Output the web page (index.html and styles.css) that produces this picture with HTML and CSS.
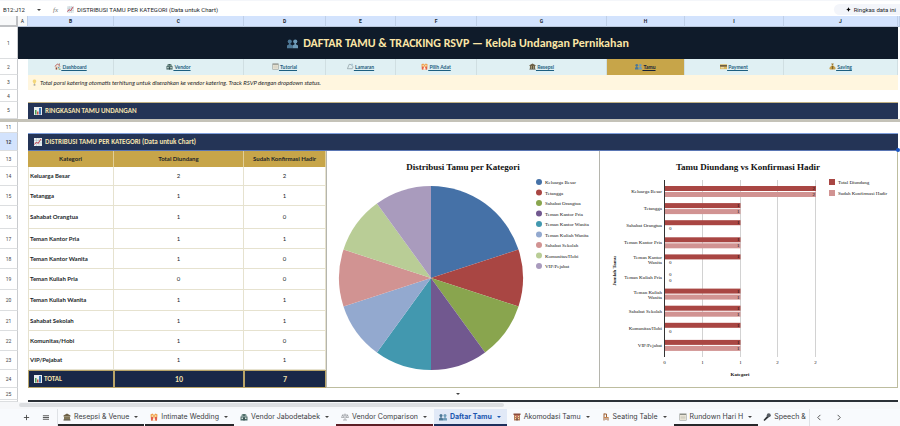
FILE: index.html
```html
<!DOCTYPE html>
<html lang="id">

<head>
    <meta charset="UTF-8">
    <meta name="viewport" content="width=device-width, initial-scale=1.0">
    <title>Daftar Tamu</title>
    <link rel="stylesheet" href="styles.css">
</head>

<body>
    <!-- icon set -->
    <svg class="sprite" aria-hidden="true">
        <symbol id="house" viewBox="0 0 16 16"><path fill="#e9d8c4" d="M3 7h10v8H3z"/><path fill="#b5453c" d="M8 1 1 8h2l5-5 5 5h2z"/><path fill="#8a4b3a" d="M11 1h2v4l-2-2zM4 10h3v5H4z"/><path fill="#5aa0c8" d="M9 9h3v3H9z"/><path fill="#5d9a4b" d="M11 13h4v2h-4z"/></symbol>
        <symbol id="shop" viewBox="0 0 16 16"><path fill="#7c9a94" d="M4 2h8l2 5H2z"/><path fill="#4c6b69" d="M1 7h14v8H1z"/><path fill="#d7e3dc" d="M3 9h3v3H3zM10 9h3v3h-3z"/><path fill="#2d4544" d="M7 10h2v5H7zM6 3h4v2H6z"/></symbol>
        <symbol id="note" viewBox="0 0 16 16"><path fill="#8b8e86" d="M1 1h14v14H1z"/><path fill="#eeeadc" d="M2 4h12v10H2z"/><path stroke="#b9b7aa" d="M3 6.500h10M3 9h10M3 11.500h10"/></symbol>
        <symbol id="ring" viewBox="0 0 16 16"><path fill="none" stroke="#85949a" stroke-width="1.500" d="M1 13 5 3l5 1 4 5-2 4z"/><path fill="#a9c9d8" d="m9 2 3-1 2 3-3 2z"/></symbol>
        <symbol id="couple" viewBox="0 0 16 16"><path fill="#f0a04b" d="M1 3 5 1l3 3 3-3 4 2-1 12H2z"/><path fill="#e25f4d" d="M2 8h4v7H2zM10 8h4v7h-4z"/><circle cx="5" cy="6" r="2" fill="#f8d7a5"/><circle cx="11" cy="6" r="2" fill="#f8d7a5"/><path fill="#fff0e6" d="m8 7 3 8H5z"/></symbol>
        <symbol id="bank" viewBox="0 0 16 16"><path fill="#6c6046" d="m8 1 7 4v2H1V5z"/><path fill="#b6a77d" d="M2 7h12v6H2z"/><path fill="#4d4635" d="M3 7h2v6H3zM7 7h2v6H7zM11 7h2v6h-2zM1 13h14v2H1z"/></symbol>
        <symbol id="people" viewBox="0 0 16 16"><circle cx="4" cy="5" r="3" fill="#4d7896"/><circle cx="12" cy="5" r="3" fill="#6e9bb8"/><path fill="#4d7896" d="M3 7h2v2l3 2v4H0v-4l3-2z"/><path fill="#6e9bb8" d="M11 7h2v2l3 2v4H8v-4l3-2z"/></symbol>
        <symbol id="card" viewBox="0 0 16 16"><path fill="#d9b65e" d="M0 3h16v11H0z"/><path fill="#554b3f" d="M0 5h16v3H0z"/><path fill="#f7ecd0" d="M2 10h7v2H2z"/></symbol>
        <symbol id="money" viewBox="0 0 16 16"><path fill="#9d7a30" d="M5 1h6L9 5H7z"/><path fill="#c9a24b" d="M7 5h2c8 5 7 10 3 10H4C0 15-1 10 7 5z"/><path fill="none" stroke="#5d471b" d="M10 8H7v2h2v3H6M8 7v7"/></symbol>
        <symbol id="bulb" viewBox="0 0 16 16"><path fill="#f3d77b" d="M8 1c5 0 5 6 2 8l-1 3H7L6 9C3 7 3 1 8 1z"/><path fill="#9a9a92" d="M6 12h4v3H6z"/></symbol>
        <symbol id="bars" viewBox="0 0 16 16"><path fill="#e8eef0" d="M0 0h16v16H0z"/><path fill="#4e9c55" d="M2 6h3v9H2z"/><path fill="#c9544a" d="M6 9h3v6H6z"/><path fill="#3a78b8" d="M10 2h4v13h-4z"/></symbol>
        <symbol id="trend" viewBox="0 0 16 16"><path fill="#e8eef0" d="M0 0h16v16H0z"/><path stroke="#a8bcc6" d="M0 5h16M0 10h16M5 0v16M10 0v16"/><path fill="none" stroke="#c63f4c" stroke-width="2" d="m1 13 4-5 3 3 6-9"/></symbol>
        <symbol id="scale" viewBox="0 0 16 16"><path fill="none" stroke="#8c9094" stroke-width="1.300" d="M8 1v13M2 4h12M4 14h8M1 9l2-5 3 5zM10 9l3-5 2 5z"/></symbol>
        <symbol id="hotel" viewBox="0 0 16 16"><path fill="#b67c5c" d="M2 3h12v12H2z"/><path fill="#8a4b3a" d="M1 1h14v3H1z"/><path fill="#f4dfa0" d="M4 6h2v2H4zM10 6h2v2h-2zM4 10h2v2H4zM10 10h2v2h-2z"/><path fill="#e25f6d" d="M7 5h2v3H7z"/><path fill="#4a3a34" d="M7 11h2v4H7z"/></symbol>
        <symbol id="chair" viewBox="0 0 16 16"><path fill="none" stroke="#9c5f33" stroke-width="2" d="M4 1v14M4 9h8v6M4 2h5v6M8 9v5"/><path fill="#c98750" d="M4 8h9v2H4z"/></symbol>
        <symbol id="mic" viewBox="0 0 16 16"><path fill="#2e3236" d="m9 5 3 3-9 8-2-2z"/><circle cx="11.500" cy="4.500" r="4" fill="#565c62"/></symbol>
        <symbol id="spark" viewBox="0 0 16 16"><path d="M8 0c1 5 3 7 8 8-5 1-7 3-8 8-1-5-3-7-8-8 5-1 7-3 8-8z"/></symbol>
    </svg>

    <header class="formula-bar">
        <input class="name-box" type="text" value="B12:J12" aria-label="Kotak nama">
        <button class="arrow" aria-label="Daftar rentang"></button>
        <span class="fx">fx</span>
        <svg class="icon"><use href="#trend"/></svg>
        <input class="formula" type="text" value="DISTRIBUSI TAMU PER KATEGORI (Data untuk Chart)" aria-label="Formula">
        <button class="summary"><svg class="icon"><use href="#spark"/></svg>Ringkas data ini</button>
    </header>

    <main>
        <table class="sheet">
            <colgroup>
                <col class="col-num"><col class="col-a"><col class="col-b"><col class="col-c"><col class="col-d"><col class="col-e"><col class="col-f"><col class="col-g"><col class="col-h"><col class="col-i"><col class="col-j"><col class="col-rest">
            </colgroup>
            <thead>
                <tr class="letters">
                    <th class="corner"></th><th class="plain">A</th><th>B</th><th>C</th><th>D</th><th>E</th><th>F</th><th>G</th><th>H</th><th>I</th><th>J</th><th></th>
                </tr>
            </thead>
            <tbody>
                <tr class="r-title">
                    <th>1</th>
                    <td colspan="10" class="title"><svg class="icon"><use href="#people"/></svg>DAFTAR TAMU &amp; TRACKING RSVP — Kelola Undangan Pernikahan</td>
                    <td></td>
                </tr>
                <tr class="r-nav">
                    <th>2</th><td></td>
                    <td><a href="#"><svg class="icon"><use href="#house"/></svg> Dashboard</a></td>
                    <td><a href="#"><svg class="icon"><use href="#shop"/></svg> Vendor</a></td>
                    <td><a href="#"><svg class="icon"><use href="#note"/></svg> Tutorial</a></td>
                    <td><a href="#"><svg class="icon"><use href="#ring"/></svg> Lamaran</a></td>
                    <td><a href="#"><svg class="icon"><use href="#couple"/></svg> Pilih Adat</a></td>
                    <td><a href="#"><svg class="icon"><use href="#bank"/></svg> Resepsi</a></td>
                    <td class="current"><a href="#"><svg class="icon"><use href="#people"/></svg> Tamu</a></td>
                    <td><a href="#"><svg class="icon"><use href="#card"/></svg> Payment</a></td>
                    <td><a href="#"><svg class="icon"><use href="#money"/></svg> Saving</a></td>
                    <td></td>
                </tr>
                <tr class="r-tip">
                    <th>3</th><td></td>
                    <td colspan="9" class="tip"><svg class="icon"><use href="#bulb"/></svg>Total porsi katering otomatis terhitung untuk diserahkan ke vendor katering. Track RSVP dengan dropdown status.</td>
                    <td></td>
                </tr>
                <tr class="r-gap"><th>4</th><td colspan="11"></td></tr>
                <tr class="r-section">
                    <th>5</th><td></td>
                    <td colspan="9" class="section"><svg class="icon"><use href="#bars"/></svg>RINGKASAN TAMU UNDANGAN</td>
                    <td></td>
                </tr>
                <tr class="freeze"><td colspan="12"></td></tr>
                <tr class="r-small"><th>11</th><td colspan="11"></td></tr>
                <tr class="r-selected">
                    <th>12</th><td></td>
                    <td colspan="9" class="section selected"><svg class="icon"><use href="#trend"/></svg>DISTRIBUSI TAMU PER KATEGORI (Data untuk Chart)<span class="handle"></span></td>
                    <td></td>
                </tr>
                <tr class="h16 heads">
                    <th>13</th><td></td>
                    <td>Kategori</td><td>Total Diundang</td><td>Sudah Konfirmasi Hadir</td>
                    <td colspan="6" rowspan="12" class="chart-cell">
                        <div class="charts">
                            <figure class="pie"><svg id="pieChart" viewBox="0 0 273 237" role="img" aria-label="Distribusi Tamu per Kategori"></svg></figure>
                            <figure class="bar"><svg id="barChart" viewBox="0 0 299 237" role="img" aria-label="Tamu Diundang vs Konfirmasi Hadir"></svg></figure>
                        </div>
                    </td>
                    <td></td>
                </tr>
                <tr class="h19 data"><th>14</th><td></td><td>Keluarga Besar</td><td>2</td><td>2</td><td></td></tr>
                <tr class="h20 data"><th>15</th><td></td><td>Tetangga</td><td>1</td><td>1</td><td></td></tr>
                <tr class="h23 data"><th>16</th><td></td><td>Sahabat Orangtua</td><td>1</td><td>0</td><td></td></tr>
                <tr class="h20 data"><th>17</th><td></td><td>Teman Kantor Pria</td><td>1</td><td>1</td><td></td></tr>
                <tr class="h20 data"><th>18</th><td></td><td>Teman Kantor Wanita</td><td>1</td><td>0</td><td></td></tr>
                <tr class="h21 data"><th>19</th><td></td><td>Teman Kuliah Pria</td><td>0</td><td>0</td><td></td></tr>
                <tr class="h21 data"><th>20</th><td></td><td>Teman Kuliah Wanita</td><td>1</td><td>1</td><td></td></tr>
                <tr class="h20 data"><th>21</th><td></td><td>Sahabat Sekolah</td><td>1</td><td>1</td><td></td></tr>
                <tr class="h20 data"><th>22</th><td></td><td>Komunitas/Hobi</td><td>1</td><td>0</td><td></td></tr>
                <tr class="h19 data"><th>23</th><td></td><td>VIP/Pejabat</td><td>1</td><td>1</td><td></td></tr>
                <tr class="h18 total"><th>24</th><td></td><td><svg class="icon"><use href="#bars"/></svg>TOTAL</td><td>10</td><td>7</td><td></td></tr>
                <tr class="r-gap"><th>25</th><td colspan="10" class="more"><button class="arrow" aria-label="Baris lainnya"></button></td><td></td></tr>
                <tr class="r-next"><th></th><td></td><td colspan="9" class="dark"></td><td></td></tr>
            </tbody>
        </table>
        <div class="scrollbar"><span></span></div>
    </main>

    <footer class="tabs">
        <button class="tool" aria-label="Tambah sheet"><svg viewBox="0 0 8 8"><path d="M4 1v6M1 4h6"/></svg></button>
        <button class="tool" aria-label="Semua sheet"><svg viewBox="0 0 8 8"><path d="M1 2h7M1 4h7M1 6h7"/></svg></button>
        <nav>
            <button class="tab black"><svg class="icon"><use href="#bank"/></svg>Resepsi &amp; Venue<i class="arrow"></i></button>
            <button class="tab black"><svg class="icon"><use href="#couple"/></svg>Intimate Wedding<i class="arrow"></i></button>
            <button class="tab"><svg class="icon"><use href="#shop"/></svg>Vendor Jabodetabek<i class="arrow"></i></button>
            <button class="tab maroon"><svg class="icon"><use href="#scale"/></svg>Vendor Comparison<i class="arrow"></i></button>
            <button class="tab active"><svg class="icon"><use href="#people"/></svg>Daftar Tamu<i class="arrow"></i></button>
            <button class="tab"><svg class="icon"><use href="#hotel"/></svg>Akomodasi Tamu<i class="arrow"></i></button>
            <button class="tab"><svg class="icon"><use href="#chair"/></svg>Seating Table<i class="arrow"></i></button>
            <button class="tab black"><svg class="icon"><use href="#note"/></svg>Rundown Hari H<i class="arrow"></i></button>
            <button class="tab last"><svg class="icon"><use href="#mic"/></svg>Speech &amp;</button>
        </nav>
        <button class="tool" aria-label="Sebelumnya"><svg viewBox="0 0 8 8"><path d="M5 1 2 4l3 3"/></svg></button>
        <button class="tool" aria-label="Berikutnya"><svg viewBox="0 0 8 8"><path d="m3 1 3 3-3 3"/></svg></button>
    </footer>

    <script src="charts.js"></script>
</body>

</html>
```
FILE: styles.css
```css
* {
    box-sizing: border-box;
}

body {
    display: flex;
    flex-direction: column;
    min-height: 100vh;
    margin: 0;
    overflow-x: hidden;
    font-family: Lato, "Open Sans", sans-serif;
    font-size: 6px;
    line-height: 8px;
    color: #1b1f2a;
    background-color: #fff;
}

button, input {
    font: inherit;
    color: inherit;
    border: none;
    padding: 0;
    margin: 0;
    background: none;
}

button {
    cursor: pointer;
}

.sprite {
    display: none;
}

.icon {
    width: 7px;
    height: 7px;
    flex: none;
    vertical-align: -1px;
}

.arrow {
    width: 0;
    height: 0;
    flex: none;
    border: 2px solid transparent;
    border-top-color: #444;
    border-bottom: none;
}

/* formula bar */
.formula-bar {
    display: flex;
    align-items: center;
    height: 16px;
    padding: 3px 0 1px 3px;
    border-top: 1px solid #f4f6fa;
    font-family: Roboto, sans-serif;
}

.name-box {
    width: 34px;
}

.fx {
    margin: 0 9px 0 12px;
    font: italic 7px "Liberation Serif", serif;
    color: #777;
}

.formula {
    flex: 1;
    margin-left: 3px;
}

.summary {
    display: flex;
    align-items: center;
    gap: 3px;
    height: 11px;
    padding: 0 4px 0 12px;
    border-radius: 6px 0 0 6px;
    background-color: #f3f5fa;
}

.summary .icon {
    width: 5px;
    height: 5px;
}

/* sheet */
main {
    flex: 1;
}

.sheet {
    width: 100%;
    table-layout: fixed;
    border-collapse: separate;
    border-spacing: 0;
}

.col-num { width: 18px; }
.col-a { width: 10px; }
.col-b { width: 86px; }
.col-c { width: 130px; }
.col-d { width: 82px; }
.col-e { width: 70px; }
.col-f { width: 81px; }
.col-g { width: 130px; }
.col-h { width: 78px; }
.col-i { width: 99px; }
.col-j { width: 114px; }
.col-rest { width: 2px; }

.sheet th, .sheet td {
    padding: 0;
    vertical-align: middle;
}

.sheet tbody th {
    font: 5px/6px Roboto, sans-serif;
    color: #444;
    text-align: center;
    border-right: 1px solid #c9cbce;
    border-bottom: 1px solid #dcdee0;
}

.letters { height: 11px; }
.r-title { height: 32px; }
.r-nav { height: 16px; }
.r-tip { height: 15px; }
.r-gap { height: 12px; }
.r-section { height: 17px; }
.freeze { height: 3px; }
.r-small { height: 11px; }
.r-selected { height: 18px; }
.r-next { height: 2px; }
.h16 { height: 16px; }
.h18 { height: 18px; }
.h19 { height: 19px; }
.h20 { height: 20px; }
.h21 { height: 21px; }
.h23 { height: 23px; }

.letters th {
    font: bold 5px/6px Roboto, sans-serif;
    background-color: #d3e3fd;
    border-right: 1px solid #bfcfe8;
    border-bottom: 1px solid #b9c6da;
}

.letters .corner, .letters .plain {
    background-color: #f8f9fa;
    font-weight: normal;
}

.letters .corner {
    border-right: 2px solid #bfc1c4;
    border-bottom: 2px solid #bfc1c4;
}

.sheet .title {
    background-color: #0f1b2a;
    color: #fbe6a6;
    font-family: Carlito, Lato, sans-serif;
    font-size: 12px;
    line-height: 14px;
    font-weight: bold;
    text-align: center;
}

.title .icon {
    width: 11px;
    height: 11px;
    margin-right: 5px;
    vertical-align: -2px;
}

.r-nav td:nth-child(n+3):nth-child(-n+11) {
    background-color: #e0f0f3;
    border-right: 1px solid #d0dfe2;
    font-size: 5px;
    font-weight: bold;
    text-align: center;
}

.r-nav a {
    color: #1d5f80;
}

.r-nav .current.current.current {
    background-color: #c7a549;
}

.r-nav .current a {
    color: #14213a;
}

.sheet .tip {
    background-color: #fff6df;
    padding-left: 3px;
    font-style: italic;
}

.tip .icon {
    margin-right: 2px;
}

.sheet .section {
    background-color: #243456;
    color: #f5e3ae;
    padding-left: 6px;
    font-family: Carlito, Lato, sans-serif;
    font-size: 7px;
    font-weight: bold;
    border-top: 1px solid #c0b083;
}

.section .icon, .total .icon {
    width: 8px;
    height: 8px;
    margin-right: 3px;
    vertical-align: -2px;
}

.freeze td {
    background-color: #c4c2b8;
}

.sheet .r-selected th {
    background-color: #d3e3fd;
    font-weight: bold;
}

.sheet .selected {
    position: relative;
    border-top: 1px solid #7f9fdc;
    border-bottom: 1px solid #5a76b4;
}

.handle {
    position: absolute;
    right: -2px;
    bottom: -2px;
    width: 4px;
    height: 4px;
    border-radius: 50%;
    background-color: #1a56c4;
}

.heads td:nth-child(n+3):nth-child(-n+5) {
    background-color: #c7a549;
    border-right: 1px solid #e2cf97;
    font-weight: bold;
    text-align: center;
}

.data td:nth-child(n+3):nth-child(-n+5) {
    border-right: 1px solid #e6e2cf;
    border-bottom: 1px solid #e6e2cf;
    text-align: center;
}

.sheet .data td:nth-child(3) {
    border-left: 1px solid #e6e2cf;
    padding-left: 1px;
    text-align: left;
    font-weight: bold;
}

.total td:nth-child(n+3):nth-child(-n+5) {
    background-color: #192848;
    border: 1px solid #b8a468;
    color: #f5e3ae;
    text-align: center;
    font-size: 7px;
    font-weight: bold;
}

.sheet .total td:nth-child(3) {
    padding-left: 5px;
    text-align: left;
    font-family: Carlito, Lato, sans-serif;
}

.total .icon {
    margin-right: 2px;
}

.more .arrow {
    display: block;
    margin: 0 auto;
}

.sheet .dark {
    background-color: #2b3036;
}

/* charts */
.charts {
    display: flex;
    background-color: #fff;
}

.charts figure {
    margin: 0;
    box-shadow: inset 1px 0 #b5b5ad, inset 0 -1px #bdbd9f;
}

.charts .pie { flex: 273; }
.charts .bar { flex: 299; box-shadow: inset 1px 0 #b5b5ad, inset 0 -1px #bdbd9f, inset -1px 0 #bdbd9f; }

.charts svg {
    display: block;
    width: 100%;
    font-family: "Liberation Serif", serif;
    font-size: 5px;
    fill: #111;
}

.chart-title {
    font-size: 9px;
    font-weight: bold;
    text-anchor: middle;
}

.axis-title {
    font-weight: bold;
    text-anchor: middle;
}

.end { text-anchor: end; }
.mid { text-anchor: middle; }

.scrollbar {
    height: 7px;
    padding: 1px 0 2px 19px;
    background-color: #f6f7f9;
}

.scrollbar span {
    display: block;
    width: 55%;
    height: 4px;
    background-color: #dcdee1;
    border-radius: 2px;
}

/* sheet tabs */
.tabs {
    display: flex;
    height: 17px;
    padding: 0 52px 0 17px;
    background-color: #f8fafd;
    font-family: Inter, Roboto, sans-serif;
    font-size: 7px;
    color: #3c4043;
}

.tool {
    width: 19px;
    flex: none;
    display: flex;
    align-items: center;
    justify-content: center;
}

.tool svg {
    width: 7px;
    height: 7px;
    fill: none;
    stroke: #444;
}

.tabs nav {
    display: flex;
    flex: 1;
    min-width: 0;
    margin-left: 2px;
    overflow: hidden;
    border-left: 1px solid #dfe2e6;
    border-right: 1px solid #dfe2e6;
}

.tab {
    display: flex;
    align-items: center;
    flex: none;
    gap: 3px;
    padding: 0 6px 0 5px;
    margin-right: 1px;
    border-bottom: 2px solid transparent;
    white-space: nowrap;
}

.tab .icon {
    width: 8px;
    height: 8px;
}

.tab .arrow {
    margin-left: 2px;
}

.tab.last {
    padding: 0 0 0 4px;
    margin-right: 0;
}

.tab.black { border-bottom-color: #26282b; }
.tab.maroon { border-bottom-color: #5c1f26; }

.tab.active {
    background-color: #e1e9f7;
    border-bottom-color: #1c2f5c;
    color: #1a56b0;
    font-weight: bold;
}

.tab.active .arrow {
    border-top-color: #1a56b0;
}
```
FILE: charts.js
```js
const guests = [
    { name: ["Keluarga Besar"], invited: 2, confirmed: 2, color: "#4571a7" },
    { name: ["Tetangga"], invited: 1, confirmed: 1, color: "#a94643" },
    { name: ["Sahabat Orangtua"], invited: 1, confirmed: 0, color: "#89a54e" },
    { name: ["Teman Kantor Pria"], invited: 1, confirmed: 1, color: "#71588f" },
    { name: ["Teman Kantor", "Wanita"], invited: 1, confirmed: 0, color: "#4298af" },
    { name: ["Teman Kuliah Pria"], invited: 0, confirmed: 0, color: "#db843d" },
    { name: ["Teman Kuliah", "Wanita"], invited: 1, confirmed: 1, color: "#93a9cf" },
    { name: ["Sahabat Sekolah"], invited: 1, confirmed: 1, color: "#d19392" },
    { name: ["Komunitas/Hobi"], invited: 1, confirmed: 0, color: "#b9cd96" },
    { name: ["VIP/Pejabat"], invited: 1, confirmed: 1, color: "#a99bbd" }
];

function drawPie() {
    const cx = 105, cy = 127, r = 92;
    const shown = guests.filter(g => g.invited > 0);
    const total = shown.reduce((sum, g) => sum + g.invited, 0);
    let out = `<text class="chart-title" x="137" y="19">Distribusi Tamu per Kategori</text>`;
    let angle = 0;

    shown.forEach((g, i) => {
        const next = angle + g.invited / total * Math.PI * 2;
        const x1 = cx + r * Math.sin(angle), y1 = cy - r * Math.cos(angle);
        const x2 = cx + r * Math.sin(next), y2 = cy - r * Math.cos(next);
        out += `<path fill="${g.color}" d="M${cx} ${cy}L${x1} ${y1}A${r} ${r} 0 0 1 ${x2} ${y2}z"/>`;
        angle = next;

        const y = 31 + i * 10.5;
        out += `<circle cx="213" cy="${y}" r="3" fill="${g.color}"/>`;
        out += `<text x="219" y="${y + 2}">${g.name.join(" ")}</text>`;
    });
    document.getElementById("pieChart").innerHTML = out;
}

function drawBars() {
    const left = 66, unit = 75.5, step = 17.1;
    let out = `<text class="chart-title" x="149" y="19">Tamu Diundang vs Konfirmasi Hadir</text>`;

    [0, 1, 1, 2, 2].forEach((label, i) => {
        const x = Math.round(left + i * unit / 2) - 0.5;
        out += `<path stroke="${i ? "#d2d2d2" : "#333"}" d="M${x} 29V206"/>`;
        out += `<text class="mid" x="${x}" y="213">${label}</text>`;
    });

    guests.forEach((g, i) => {
        const top = 35 + i * step;
        g.name.forEach((line, n) => {
            const y = top + 7 + n * 5 - (g.name.length - 1) * 2;
            out += `<text class="end" x="63" y="${y}">${line}</text>`;
        });
        [[g.invited, "#a94643"], [g.confirmed, "#d19392"]].forEach(([value, color], n) => {
            const y = top + n * 6;
            out += `<rect x="${left}" y="${y}" width="${value * unit}" height="5" fill="${color}"/>`;
            out += value
                ? `<text class="end" x="${left + value * unit - 1}" y="${y + 4}">${value}</text>`
                : `<text x="70" y="${y + 4}">0</text>`;
        });
    });

    out += `<text class="axis-title" x="141" y="225">Kategori</text>`;
    out += `<text class="axis-title" transform="translate(17 120) rotate(-90)">Jumlah Tamu</text>`;
    out += `<rect x="230" y="28" width="6" height="6" fill="#a94643"/><text x="239" y="33">Total Diundang</text>`;
    out += `<rect x="230" y="39" width="6" height="6" fill="#d19392"/><text x="239" y="44">Sudah Konfirmasi Hadir</text>`;
    document.getElementById("barChart").innerHTML = out;
}

drawPie();
drawBars();
```
